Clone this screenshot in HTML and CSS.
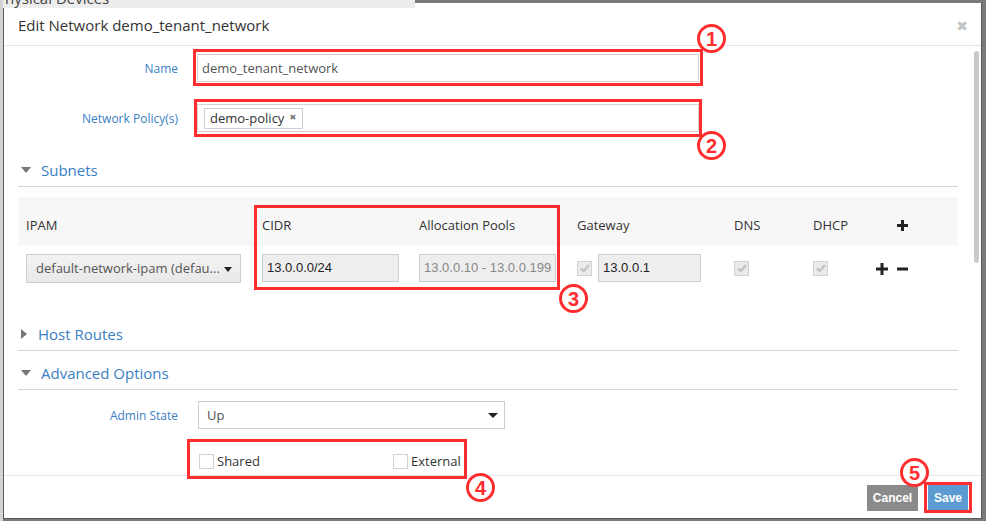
FILE: index.html
```html
<!DOCTYPE html>
<html>
<head>
<meta charset="utf-8">
<link rel="stylesheet" href="styles.css">
</head>
<body>
<div class="stage">
  <div class="peek"><span>Physical Devices</span></div>
  <div class="modal">
    <div class="modal-header">
      <h3 class="title">Edit Network demo_tenant_network</h3>
      <span class="close">&#x2716;</span>
    </div>
    <div class="modal-body">
      <div class="form-row row-name">
        <label class="form-label">Name</label>
        <div class="text-input">demo_tenant_network</div>
      </div>
      <div class="form-row row-policy">
        <label class="form-label">Network Policy(s)</label>
        <div class="text-input tag-input">
          <span class="tag">demo-policy <span class="tag-x">&#x2716;</span></span>
        </div>
      </div>

      <div class="section-head sec-subnets">
        <span class="caret-down"></span><span class="section-title">Subnets</span>
      </div>

      <div class="subnet-table">
        <div class="grid grid-head">
          <div>IPAM</div>
          <div>CIDR</div>
          <div>Allocation Pools</div>
          <div>Gateway</div>
          <div>DNS</div>
          <div>DHCP</div>
          <div class="head-plus"><svg width="11" height="11" viewBox="0 0 11 11"><rect x="4" y="0" width="3" height="11" fill="#222"/><rect x="0" y="4" width="11" height="3" fill="#222"/></svg></div>
        </div>
        <div class="grid grid-row">
          <div><div class="select ipam">default-network-ipam (defau...<span class="sel-caret"></span></div></div>
          <div><div class="dis-input val">13.0.0.0/24</div></div>
          <div><div class="dis-input val pool">13.0.0.10 - 13.0.0.199</div></div>
          <div class="gw-cell">
            <span class="chk checked"><svg width="12" height="12" viewBox="0 0 12 12"><path d="M2 6.5 L4.8 9 L10 3" fill="none" stroke="#c4c4c4" stroke-width="2.4"/></svg></span>
            <div class="dis-input val gw">13.0.0.1</div>
          </div>
          <div class="chk-cell"><span class="chk checked"><svg width="12" height="12" viewBox="0 0 12 12"><path d="M2 6.5 L4.8 9 L10 3" fill="none" stroke="#c4c4c4" stroke-width="2.4"/></svg></span></div>
          <div class="chk-cell"><span class="chk checked"><svg width="12" height="12" viewBox="0 0 12 12"><path d="M2 6.5 L4.8 9 L10 3" fill="none" stroke="#c4c4c4" stroke-width="2.4"/></svg></span></div>
          <div class="row-actions">
            <svg width="12" height="12" viewBox="0 0 12 12"><rect x="4.5" y="0" width="3" height="12" fill="#222"/><rect x="0" y="4.5" width="12" height="3" fill="#222"/></svg>
            <svg width="11" height="12" viewBox="0 0 11 12"><rect x="0" y="4.5" width="11" height="3" fill="#222"/></svg>
          </div>
        </div>
      </div>

      <div class="section-head sec-host">
        <span class="caret-right"></span><span class="section-title">Host Routes</span>
      </div>
      <div class="section-head sec-adv">
        <span class="caret-down"></span><span class="section-title">Advanced Options</span>
      </div>

      <div class="form-row row-admin">
        <label class="form-label">Admin State</label>
        <div class="select admin">Up<span class="sel-caret"></span></div>
      </div>
      <div class="check-row">
        <label class="check-item shared"><span class="chk"></span>Shared</label>
        <label class="check-item"><span class="chk"></span>External</label>
      </div>
      <div class="scrollbar"></div>
    </div>
    <div class="modal-footer">
      <button class="btn btn-cancel">Cancel</button>
      <button class="btn btn-save">Save</button>
    </div>
  </div>

  <div class="anno box b1"></div>
  <div class="anno box b2"></div>
  <div class="anno box b3"></div>
  <div class="anno box b4"></div>
  <div class="anno box b5"></div>
  <div class="anno num n1">1</div>
  <div class="anno num n2">2</div>
  <div class="anno num n3">3</div>
  <div class="anno num n4">4</div>
  <div class="anno num n5">5</div>
</div>
</body>
</html>
```
FILE: styles.css
```css
* { box-sizing: border-box; }
html, body { margin: 0; padding: 0; }
body {
  width: 986px;
  height: 521px;
  overflow: hidden;
  background: linear-gradient(to right, #d4d4d4 0, #d4d4d4 3px, #7a7a7a 3px);
  font-family: "Open Sans", "DejaVu Sans", sans-serif;
  color: #333;
}
.stage {
  position: relative;
  width: 986px;
  height: 521px;
  padding: 3px 4px 2px 3px;
}
.peek {
  position: absolute;
  left: 3px;
  top: 0;
  width: 412px;
  height: 8px;
  background: #ededed;
  overflow: hidden;
  z-index: 2;
}
.peek span {
  position: absolute;
  left: -7px;
  top: -12px;
  font-size: 15px;
  color: #444;
  white-space: nowrap;
}
.modal {
  position: relative;
  width: 979px;
  height: 516px;
  background: #fff;
  border: 1px solid #5a5a5a;
  border-top: none;
  display: flex;
  flex-direction: column;
}
.modal-header {
  height: 43px;
  flex: none;
  border-bottom: 1px solid #e5e5e5;
  display: flex;
  align-items: center;
  justify-content: space-between;
  padding: 0 13px 0 14px;
}
.title {
  margin: 0;
  font-size: 15px;
  font-weight: 400;
  color: #333;
  padding-top: 1px;
}
.close {
  color: #c4c4c4;
  font-size: 14px;
  font-family: "DejaVu Sans", sans-serif;
  padding-top: 3px;
}
.modal-body {
  position: relative;
  flex: 1;
  padding: 8px 23px 0 14px;
}
.form-row {
  display: flex;
  align-items: center;
}
.form-label {
  width: 160px;
  text-align: right;
  font-size: 12px;
  color: #3a80c4;
  margin-right: 19px;
}
.text-input {
  width: 502px;
  height: 28px;
  border: 1px solid #d4d4d4;
  font-size: 13px;
  color: #555;
  padding: 0 4px;
  line-height: 26px;
}
.row-policy { margin-top: 22px; }
.tag-input { display: flex; align-items: center; padding: 0 6px; }
.tag {
  display: inline-flex;
  align-items: center;
  height: 21px;
  border: 1px solid #cfcfcf;
  background: #fff;
  padding: 0 6px 0 5px;
  font-size: 13px;
  color: #333;
}
.tag-x {
  font-size: 8px;
  color: #777;
  margin-left: 5px;
  font-family: "DejaVu Sans", sans-serif;
}
.section-head {
  height: 34px;
  display: flex;
  align-items: center;
  border-bottom: 1px solid #d6d6d6;
}
.sec-subnets { margin-top: 21px; }
.sec-host { margin-top: 26px; }
.sec-adv { margin-top: 5px; }
.section-title {
  font-size: 15px;
  color: #3a80c4;
}
.caret-down {
  width: 0; height: 0;
  border-left: 5px solid transparent;
  border-right: 5px solid transparent;
  border-top: 6px solid #777;
  margin: 0 10px 0 3px;
}
.caret-right {
  width: 0; height: 0;
  border-top: 5px solid transparent;
  border-bottom: 5px solid transparent;
  border-left: 6px solid #777;
  margin: 0 11px 0 3px;
}
.subnet-table { margin-top: 10px; }
.grid {
  display: grid;
  grid-template-columns: 236px 157px 158px 157px 79px 63px 1fr;
  padding-left: 8px;
}
.grid-head {
  background: #f7f7f7;
  height: 49px;
  font-size: 13px;
  color: #333;
  align-items: center;
  padding-top: 7px;
}
.head-plus { padding-left: 21px; display: flex; }
.grid-row {
  padding-top: 8px;
  height: 45px;
  align-items: start;
}
.select {
  position: relative;
  height: 29px;
  border: 1px solid #cdcdcd;
  font-size: 13px;
  color: #555;
  line-height: 27px;
  padding-left: 9px;
}
.select.ipam {
  width: 215px;
  background: linear-gradient(#f2f2f2, #e9e9e9);
}
.sel-caret {
  position: absolute;
  right: 8px;
  top: 12px;
  width: 0; height: 0;
  border-left: 4px solid transparent;
  border-right: 4px solid transparent;
  border-top: 5px solid #222;
}
.dis-input {
  height: 28px;
  background: #eee;
  border: 1px solid #ccc;
  font-family: "Liberation Sans", Arial, sans-serif;
  font-size: 13px;
  color: #222;
  line-height: 26px;
  padding-left: 4px;
}
.dis-input.val { width: 137px; }
.dis-input.pool { color: #888; }
.dis-input.gw { width: 103px; }
.gw-cell { display: flex; align-items: center; height: 28px; }
.gw-cell .chk { margin-right: 6px; }
.chk {
  display: inline-flex;
  align-items: center;
  justify-content: center;
  width: 15px;
  height: 15px;
  border: 1px solid #d2d2d2;
  background: #fff;
  flex: none;
}
.chk.checked { background: #ebebeb; }
.chk-cell { padding-top: 3px; }
.row-actions {
  display: flex;
  align-items: center;
  gap: 9px;
  height: 29px;
  padding-top: 1px;
}
.row-admin { margin-top: 11px; }
.row-admin .form-label { margin-right: 20px; }
.select.admin {
  width: 307px;
  height: 28px;
  background: #fff;
  line-height: 26px;
  padding-left: 8px;
}
.select.admin .sel-caret { right: 6px; top: 11px; border-left-width: 5px; border-right-width: 5px; border-top-width: 5px; }
.check-row {
  display: flex;
  align-items: center;
  margin-top: 23px;
  padding-left: 181px;
  font-size: 13px;
  color: #333;
}
.check-item { display: flex; align-items: center; }
.check-item .chk { margin-right: 3px; }
.check-item.shared { width: 194px; }
.scrollbar {
  position: absolute;
  right: 2px;
  top: 5px;
  width: 5px;
  height: 212px;
  border-radius: 3px;
  background: #c9c9c9;
}
.modal-footer {
  height: 43px;
  flex: none;
  border-top: 1px solid #e3e8ec;
  display: flex;
  justify-content: flex-end;
  align-items: flex-start;
  gap: 10px;
  padding: 9px 13px 0 0;
}
.btn {
  border: none;
  height: 26px;
  font-family: "Liberation Sans", Arial, sans-serif;
  font-weight: 700;
  font-size: 12px;
  color: #fff;
  padding: 0;
}
.btn-cancel { width: 51px; background: #8a8a8a; }
.btn-save { width: 40px; background: #5b9bd1; }

.anno { position: absolute; z-index: 5; }
.box { border: 3px solid #ff2d2d; }
.b1 { left: 193px; top: 49px; width: 510px; height: 37px; }
.b2 { left: 194px; top: 99px; width: 508px; height: 38px; }
.b3 { left: 254px; top: 205px; width: 306px; height: 85px; }
.b4 { left: 187px; top: 439px; width: 280px; height: 40px; }
.b5 { left: 924px; top: 482px; width: 48px; height: 31px; }
.num {
  width: 29px;
  height: 29px;
  border: 3px solid #ff2d2d;
  border-radius: 50%;
  background: #fff;
  color: #ff2d2d;
  font-family: "Liberation Sans", Arial, sans-serif;
  font-weight: 700;
  font-size: 20px;
  display: flex;
  align-items: center;
  justify-content: center;
  line-height: 1;
}
.n1 { left: 697px; top: 24px; }
.n2 { left: 697px; top: 131px; }
.n3 { left: 559px; top: 284px; }
.n4 { left: 466px; top: 473px; }
.n5 { left: 900px; top: 458px; }
```
